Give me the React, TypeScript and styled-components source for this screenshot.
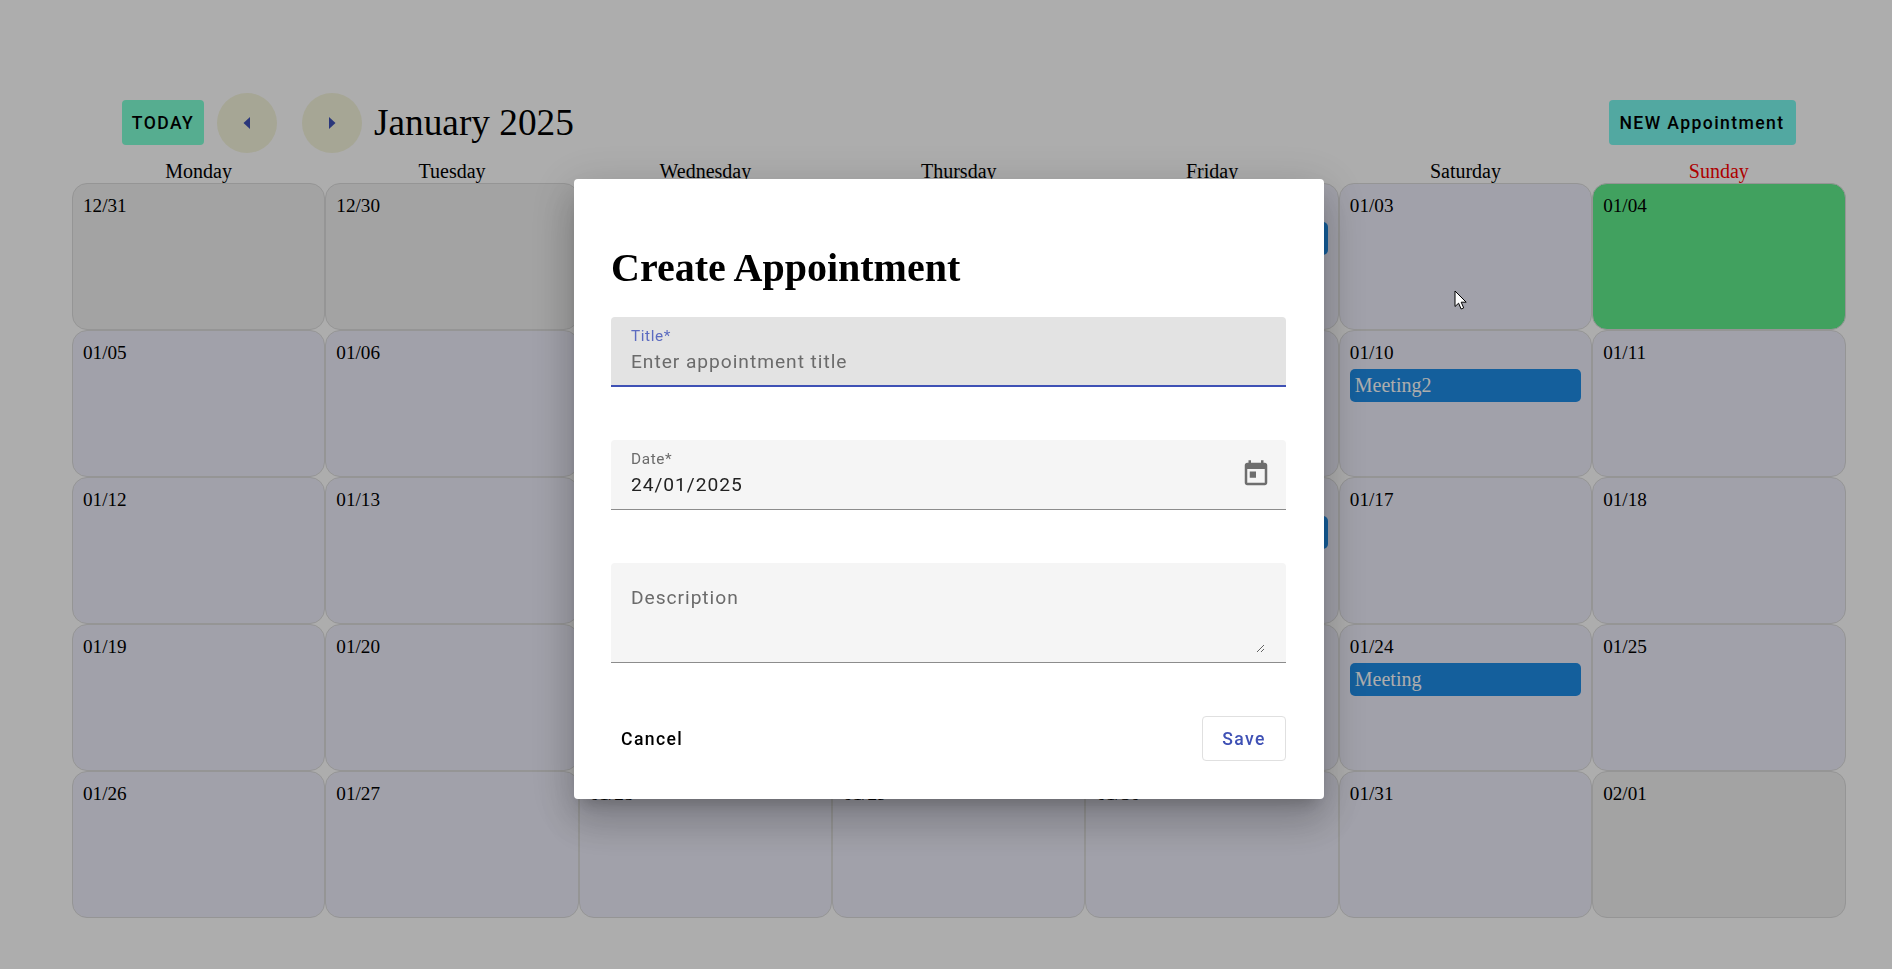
import styled, { createGlobalStyle } from "styled-components";

const GlobalStyle = createGlobalStyle`
  html, body {
    margin: 0;
    padding: 0;
    background: #fff;
    overflow: hidden;
  }
  body {
    font-family: "Liberation Serif", "Times New Roman", serif;
    color: #000;
  }
`;

const weekdays = ["Monday", "Tuesday", "Wednesday", "Thursday", "Friday", "Saturday", "Sunday"];

const days = [
  { date: "12/31", outside: true },
  { date: "12/30", outside: true },
  { date: "12/31", outside: true },
  { date: "01/01" },
  { date: "01/02", event: "Meeting3" },
  { date: "01/03" },
  { date: "01/04", today: true },
  { date: "01/05" },
  { date: "01/06" },
  { date: "01/07" },
  { date: "01/08" },
  { date: "01/09" },
  { date: "01/10", event: "Meeting2" },
  { date: "01/11" },
  { date: "01/12" },
  { date: "01/13" },
  { date: "01/14" },
  { date: "01/15" },
  { date: "01/16", event: "Meeting4" },
  { date: "01/17" },
  { date: "01/18" },
  { date: "01/19" },
  { date: "01/20" },
  { date: "01/21" },
  { date: "01/22" },
  { date: "01/23" },
  { date: "01/24", event: "Meeting" },
  { date: "01/25" },
  { date: "01/26" },
  { date: "01/27" },
  { date: "01/28" },
  { date: "01/29" },
  { date: "01/30" },
  { date: "01/31" },
  { date: "02/01", outside: true },
];

export default function App() {
  return (
    <>
      <GlobalStyle />
      <Page>
        <Toolbar>
          <TodayButton>TODAY</TodayButton>
          <RoundButton>
            <svg width="8" height="12" viewBox="0 0 8 12">
              <path d="M7 0v12L0.5 6z" fill="#3f51b5" />
            </svg>
          </RoundButton>
          <RoundButton $next>
            <svg width="8" height="12" viewBox="0 0 8 12">
              <path d="M1 0v12L7.5 6z" fill="#3f51b5" />
            </svg>
          </RoundButton>
          <MonthTitle>January 2025</MonthTitle>
          <NewButton>NEW Appointment</NewButton>
        </Toolbar>
        <WeekRow>
          {weekdays.map((day) => (
            <WeekDay key={day} $sunday={day === "Sunday"}>
              {day}
            </WeekDay>
          ))}
        </WeekRow>
        <Grid>
          {days.map((day, i) => (
            <Cell key={i} $outside={day.outside} $today={day.today}>
              <DateLabel>{day.date}</DateLabel>
              {day.event && <EventChip>{day.event}</EventChip>}
            </Cell>
          ))}
        </Grid>
      </Page>

      <Scrim>
        <Dialog>
          <DialogTitle>Create Appointment</DialogTitle>
          <Field $focused>
            <FieldLabel $focused>Title*</FieldLabel>
            <FieldInput placeholder="Enter appointment title" readOnly />
          </Field>
          <Field>
            <FieldLabel>Date*</FieldLabel>
            <FieldInput value="24/01/2025" readOnly />
            <CalendarIcon viewBox="0 0 24 24">
              <path d="M19 3h-1V1h-2v2H8V1H6v2H5c-1.11 0-1.99.9-1.99 2L3 19c0 1.1.89 2 2 2h14c1.1 0 2-.9 2-2V5c0-1.1-.9-2-2-2zm0 16H5V8h14v11zM7 10h5v5H7z" />
            </CalendarIcon>
          </Field>
          <TextareaField>
            <FieldTextarea placeholder="Description" readOnly />
          </TextareaField>
          <Actions>
            <CancelButton>Cancel</CancelButton>
            <SaveButton>Save</SaveButton>
          </Actions>
        </Dialog>
      </Scrim>

      <Pointer width="14" height="20" viewBox="0 0 14 20">
        <path d="M1 1v15.5l3.6-3.3 2.5 5.8 2.6-1.1-2.5-5.7h5z" fill="#fff" stroke="#000" strokeWidth="1" />
      </Pointer>
    </>
  );
}

const Page = styled.div`
  box-sizing: border-box;
  width: 1892px;
  height: 969px;
  padding: 93px 46.5px 0 72px;
`;

const Toolbar = styled.div`
  display: flex;
  align-items: center;
  height: 60px;
  padding: 0 50px;
`;

const ActionButton = styled.button`
  height: 45px;
  padding: 0 10px;
  border: none;
  border-radius: 4px;
  font-family: Roboto, sans-serif;
  font-size: 17.6px;
  font-weight: 500;
  letter-spacing: 1.4px;
  color: #000;
  white-space: nowrap;
`;

const TodayButton = styled(ActionButton)`
  width: 82px;
  padding: 0;
  margin-bottom: 1px;
  background: #7fffd4;
`;

const NewButton = styled(ActionButton)`
  width: 187px;
  margin-left: auto;
  margin-bottom: 1px;
  background: #7af8ee;
`;

const RoundButton = styled.button<{ $next?: boolean }>`
  display: flex;
  align-items: center;
  justify-content: center;
  width: 60px;
  height: 60px;
  margin-left: ${(props) => (props.$next ? "25px" : "13px")};
  padding: 0;
  border: none;
  border-radius: 50%;
  background: #f5f5dc;
`;

const MonthTitle = styled.div`
  margin-left: 12px;
  font-size: 37.3px;
  line-height: 44px;
`;

const WeekRow = styled.div`
  display: grid;
  grid-template-columns: repeat(7, 1fr);
  margin-top: 7px;
`;

const WeekDay = styled.div<{ $sunday?: boolean }>`
  text-align: center;
  font-size: 20px;
  line-height: 23px;
  color: ${(props) => (props.$sunday ? "#ff0000" : "#000")};
`;

const Grid = styled.div`
  display: grid;
  grid-template-columns: repeat(7, 1fr);
  grid-auto-rows: 147px;
`;

const Cell = styled.div<{ $outside?: boolean; $today?: boolean }>`
  box-sizing: border-box;
  padding: 11px 10px;
  border: 1px solid #dcdcdc;
  border-radius: 15px;
  background: ${(props) => (props.$today ? "#60ed8d" : props.$outside ? "#f0f0f0" : "#eeeefb")};
`;

const DateLabel = styled.div`
  font-size: 19.2px;
  line-height: 22px;
`;

const EventChip = styled.div`
  height: 33px;
  margin-top: 5px;
  padding-left: 5px;
  border-radius: 5px;
  background: #1e8ce6;
  color: #fff;
  font-size: 20px;
  line-height: 33px;
`;

const Scrim = styled.div`
  position: fixed;
  inset: 0;
  display: flex;
  align-items: flex-start;
  justify-content: flex-start;
  background: rgba(0, 0, 0, 0.32);
`;

const Dialog = styled.div`
  box-sizing: border-box;
  display: flex;
  flex-direction: column;
  width: 750px;
  height: 620px;
  margin: 179px 0 0 574px;
  padding: 0 38px 0 37px;
  border-radius: 4px;
  background: #fff;
  box-shadow: 0 11px 15px -7px rgba(0, 0, 0, 0.2), 0 24px 38px 3px rgba(0, 0, 0, 0.14), 0 9px 46px 8px rgba(0, 0, 0, 0.12);
`;

const DialogTitle = styled.h2`
  margin: 66px 0 26px;
  font-size: 40px;
  line-height: 46px;
  font-weight: 700;
`;

const Field = styled.div<{ $focused?: boolean }>`
  box-sizing: border-box;
  position: relative;
  height: 70px;
  margin-bottom: 53px;
  padding: 10px 20px 0;
  border-radius: 4px 4px 0 0;
  background: ${(props) => (props.$focused ? "#e3e3e3" : "#f5f5f5")};
  border-bottom: ${(props) => (props.$focused ? "2px solid #3f51b5" : "1px solid #8c8c8c")};
`;

const FieldLabel = styled.div<{ $focused?: boolean }>`
  margin-bottom: 3px;
  font-family: Roboto, sans-serif;
  font-size: 15.36px;
  line-height: 18px;
  letter-spacing: 0.6px;
  color: ${(props) => (props.$focused ? "#5c6bc0" : "#6b6b6b")};
`;

const FieldInput = styled.input`
  display: block;
  width: 100%;
  height: 26px;
  padding: 0;
  border: none;
  outline: none;
  background: transparent;
  font-family: Roboto, sans-serif;
  font-size: 19.2px;
  letter-spacing: 0.96px;
  color: #222;

  &::placeholder {
    color: #6b6b6b;
    opacity: 1;
  }
`;

const CalendarIcon = styled.svg`
  position: absolute;
  top: 19px;
  right: 15px;
  width: 30px;
  height: 30px;
  fill: #6e6e6e;
`;

const TextareaField = styled.div`
  box-sizing: border-box;
  height: 100px;
  margin-bottom: 53px;
  padding: 22px 21px 0 20px;
  border-radius: 4px 4px 0 0;
  background: #f5f5f5;
  border-bottom: 1px solid #8c8c8c;
`;

const FieldTextarea = styled.textarea`
  display: block;
  box-sizing: border-box;
  width: 100%;
  height: 68px;
  padding: 0;
  border: none;
  outline: none;
  background: transparent;
  font-family: Roboto, sans-serif;
  font-size: 19.2px;
  line-height: 26px;
  letter-spacing: 0.96px;

  &::placeholder {
    color: #6b6b6b;
    opacity: 1;
  }
`;

const Actions = styled.div`
  display: flex;
  justify-content: space-between;
`;

const CancelButton = styled(ActionButton)`
  background: transparent;
`;

const SaveButton = styled(ActionButton)`
  width: 84px;
  padding: 0;
  background: #fff;
  border: 1px solid #e0e0e0;
  color: #3f51b5;
`;

const Pointer = styled.svg`
  position: fixed;
  left: 1454px;
  top: 290px;
`;
